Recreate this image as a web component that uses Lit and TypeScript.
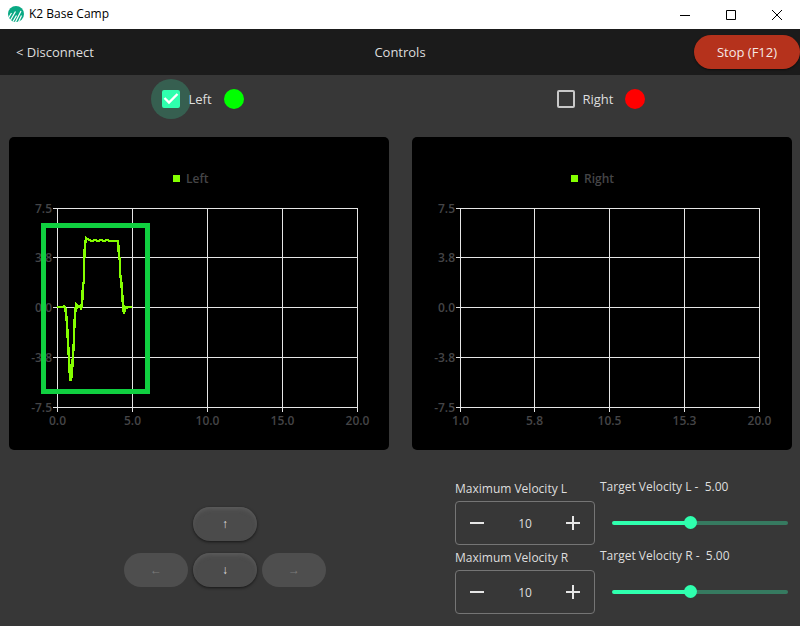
import { LitElement, html, css, svg, nothing } from "lit";
import { customElement, property, state } from "lit/decorators.js";

const GRID_Y = [71, 120, 170, 220, 270];
const Y_LABELS = ["7.5", "3.8", "0.0", "-3.8", "-7.5"];

const VELOCITY_TRACE =
  "48,170 54,170 55,169 56,170 57,176 58,186 59,206 60,222 61,240 61,243 62,243 63,234 64,218 65,204 65,196 66,178 67,167 68,168 69,170 71,169 72,171 73,169 74,148 75,144 75,126 76,108 77,101 80,103 83,104 86,103 89,104 92,103 95,104 98,103 101,104 109,104 110,118 111,124 111,137 112,142 113,154 114,168 115,177 116,170 118,171 119,170 123,170";

/** Line chart with a legend, a grid and an optional trace and highlight frame. */
@customElement("velocity-chart")
export class VelocityChart extends LitElement {
  @property() name = "";
  @property() trace = "";
  @property({ type: Boolean }) highlight = false;
  @property({ attribute: false }) gridX: number[] = [];
  @property({ attribute: false }) xLabels: string[] = [];
  @property({ type: Number }) legendX = 164;

  static styles = css`
    :host {
      display: block;
      background: #000;
      border-radius: 5px;
      overflow: hidden;
    }
    svg {
      display: block;
      width: 100%;
      height: auto;
    }
    text {
      font: 600 12px "Open Sans", "Noto Sans", sans-serif;
      fill: #454547;
    }
    .grid {
      stroke: #e6e6e6;
      stroke-width: 1;
      shape-rendering: crispEdges;
    }
    .trace {
      fill: none;
      stroke: #84ff00;
      stroke-width: 2.5;
      shape-rendering: crispEdges;
    }
    .frame {
      fill: none;
      stroke: #10d040;
      stroke-width: 5;
    }
    .key {
      fill: #84ff00;
    }
    .end {
      text-anchor: end;
    }
    .middle {
      text-anchor: middle;
    }
  `;

  render() {
    const first = this.gridX[0];
    const last = this.gridX[this.gridX.length - 1];
    return html`
      <svg viewBox="0 0 380 313" role="img" aria-label="${this.name} velocity">
        <rect class="key" x=${this.legendX} y="38" width="7" height="7"></rect>
        <text x=${this.legendX + 13} y="46">${this.name}</text>
        ${GRID_Y.map(
          (y, i) => svg`
            <text class="end" x=${first - 5} y=${y + 5}>${Y_LABELS[i]}</text>
            <line class="grid" x1=${first - 4} x2=${last + 1} y1=${y + 0.5} y2=${y + 0.5}></line>`
        )}
        ${this.gridX.map(
          (x, i) => svg`
            <line class="grid" x1=${x + 0.5} x2=${x + 0.5} y1="71" y2="275"></line>
            <text class="middle" x=${x + 0.5} y="288">${this.xLabels[i]}</text>`
        )}
        ${this.trace ? svg`<polyline class="trace" points=${this.trace}></polyline>` : nothing}
        ${this.highlight
          ? svg`<rect class="frame" x="34.5" y="88.5" width="104" height="166"></rect>`
          : nothing}
      </svg>
    `;
  }
}

/** Numeric field with minus and plus buttons beside a target slider. */
@customElement("velocity-control")
export class VelocityControl extends LitElement {
  @property() side = "L";
  @state() private max = 10;
  @state() private target = 5;

  static styles = css`
    :host {
      display: grid;
      grid-template-columns: 140px 1fr;
      column-gap: 5px;
      height: 69px;
      color: #dedede;
    }
    label {
      display: block;
      font-size: 12px;
      line-height: 18px;
      white-space: pre;
    }
    .max {
      padding-top: 2px;
    }
    .field {
      display: flex;
      box-sizing: border-box;
      height: 44px;
      margin-top: 3px;
      border: 1px solid #757575;
      border-radius: 4px;
    }
    button {
      width: 42px;
      padding: 0;
      border: 0;
      background: none;
      color: #e6e6e6;
      display: grid;
      place-items: center;
    }
    .value {
      flex: 1;
      min-width: 0;
      padding: 0;
      border: 0;
      background: none;
      color: inherit;
      font: inherit;
      font-size: 12px;
      text-align: center;
    }
    .slider {
      appearance: none;
      display: block;
      width: calc(100% - 12px);
      height: 24px;
      margin: 15px 0 0 12px;
      background: none;
    }
    .slider::-webkit-slider-runnable-track {
      height: 4px;
      border-radius: 2px;
      background: linear-gradient(to right, #2fffae var(--fill), #367a60 var(--fill));
    }
    .slider::-webkit-slider-thumb {
      appearance: none;
      width: 13px;
      height: 13px;
      margin-top: -5px;
      border-radius: 50%;
      background: #2fffae;
    }
  `;

  render() {
    const fill = ((this.target - 1) / (this.max - 1)) * 100;
    return html`
      <div class="max">
        <label for="max">Maximum Velocity ${this.side}</label>
        <div class="field">
          <button aria-label="Decrease" @click=${() => (this.max = Math.max(2, this.max - 1))}>
            <svg width="14" height="14"><path d="M0 7H14" stroke="currentColor" stroke-width="2" /></svg>
          </button>
          <input class="value" id="max" type="text" inputmode="numeric" .value=${String(this.max)} />
          <button aria-label="Increase" @click=${() => this.max++}>
            <svg width="14" height="14"><path d="M0 7H14M7 0V14" stroke="currentColor" stroke-width="2" /></svg>
          </button>
        </div>
      </div>
      <div>
        <label for="target">Target Velocity ${this.side} -  ${this.target.toFixed(2)}</label>
        <input
          class="slider"
          id="target"
          type="range"
          min="1"
          max=${this.max}
          step="0.01"
          .value=${String(this.target)}
          style="--fill:${fill}%"
          @input=${(e: Event) => (this.target = Number((e.target as HTMLInputElement).value))}
        />
      </div>
    `;
  }
}

@customElement("app-root")
export class AppRoot extends LitElement {
  static styles = css`
    :host {
      display: flex;
      flex-direction: column;
      min-height: 100vh;
      background: #373737;
      color: #dedede;
      font-family: "Open Sans", "Noto Sans", sans-serif;
      font-size: 13px;
    }
    button {
      font: inherit;
      color: inherit;
      border: 0;
      padding: 0;
    }
    .titlebar {
      display: flex;
      align-items: center;
      height: 29px;
      padding-left: 8px;
      background: #fff;
      color: #000;
      font-size: 12px;
    }
    .logo {
      margin: 0 5px 2px 0;
    }
    .app-name {
      flex: 1;
      padding-bottom: 2px;
    }
    .window-button {
      display: grid;
      place-items: center;
      width: 46px;
      height: 27px;
      background: none;
    }
    .header {
      display: grid;
      grid-template-columns: 1fr auto 1fr;
      align-items: center;
      height: 46px;
      background: #1b1b1b;
    }
    .back {
      justify-self: start;
      margin-left: 16px;
      color: inherit;
      text-decoration: none;
    }
    .stop {
      justify-self: end;
      width: 106px;
      height: 34px;
      border-radius: 17px;
      background: #b5321c;
      color: #f5e9e6;
      box-shadow: 0 1px 2px #0008;
    }
    .toggles {
      display: grid;
      grid-template-columns: 1fr 1fr;
      height: 48px;
      padding-left: 4px;
    }
    .toggle {
      display: flex;
      align-items: center;
      justify-content: center;
    }
    .toggle label {
      position: relative;
      margin: 0 12px 0 8px;
    }
    .box {
      position: relative;
      display: grid;
      place-items: center;
      width: 18px;
      height: 18px;
    }
    .box.focused::before {
      content: "";
      position: absolute;
      inset: -11px;
      border-radius: 50%;
      background: #365f50;
    }
    .box input {
      grid-area: 1 / 1;
      position: relative;
      appearance: none;
      box-sizing: border-box;
      width: 18px;
      height: 18px;
      margin: 0;
      border: 2px solid #c8c8c8;
      border-radius: 2px;
    }
    .box input:checked {
      border-color: #2fffae;
      background: #2fffae;
    }
    .tick {
      grid-area: 1 / 1;
      position: relative;
      pointer-events: none;
    }
    .lamp {
      width: 20px;
      height: 20px;
      border-radius: 50%;
      background: #f00;
    }
    .lamp.on {
      background: #0f0;
    }
    .charts {
      display: grid;
      grid-template-columns: 1fr 1fr;
      gap: 23px;
      padding: 14px 8px 0 9px;
    }
    .controls {
      display: flex;
      padding: 28px 12px 0 0;
    }
    .pad {
      flex: 1;
      display: grid;
      grid-template-columns: repeat(3, 64px);
      grid-auto-rows: 34px;
      gap: 12px 5px;
      justify-content: center;
      padding-top: 29px;
    }
    .pad button {
      border-radius: 17px;
      background: #4b4b4b;
      box-shadow: 0 1px 3px #0009, inset 0 3px 4px -1px #5c5c5c;
      font-family: "Liberation Sans", sans-serif;
      font-size: 12px;
    }
    .pad .up {
      grid-column: 2;
    }
    .pad .left {
      grid-column: 1;
    }
    .pad button:disabled {
      background: #4e4e4e;
      box-shadow: none;
      color: #7c7c7c;
    }
    .velocities {
      width: 333px;
      margin-left: 5px;
    }
  `;

  render() {
    return html`
      <div class="titlebar">
        <svg class="logo" width="16" height="16" viewBox="0 0 16 16" aria-hidden="true">
          <circle cx="8" cy="8" r="8" fill="#0aa984" />
          <path
            d="M0.500 12L3.500 7M2 15L7.500 5.500M5 15.500L8.500 9.500M7.500 16L13 5M10.500 16L13.500 9.500"
            fill="none" stroke="#fff" stroke-width="1.200" />
        </svg>
        <span class="app-name">K2 Base Camp</span>
        <button class="window-button" aria-label="Minimize">
          <svg width="10" height="10"><path d="M0 5.500H10" stroke="#000" /></svg>
        </button>
        <button class="window-button" aria-label="Maximize">
          <svg width="10" height="10"><path d="M.5.5H9.500V9.500H.5Z" fill="none" stroke="#000" /></svg>
        </button>
        <button class="window-button" aria-label="Close">
          <svg width="10" height="10"><path d="M0 0L10 10M10 0L0 10" stroke="#000" /></svg>
        </button>
      </div>

      <header class="header">
        <a class="back" href="#">&lt; Disconnect</a>
        <span>Controls</span>
        <button class="stop">Stop (F12)</button>
      </header>

      <div class="toggles">
        <div class="toggle">
          <span class="box focused">
            <input id="left" type="checkbox" checked />
            <svg class="tick" width="18" height="18">
              <path d="M2.500 8L7 12.500L15.500 4" fill="none" stroke="#fff" stroke-width="2.400" />
            </svg>
          </span>
          <label for="left">Left</label>
          <span class="lamp on"></span>
        </div>
        <div class="toggle">
          <span class="box"><input id="right" type="checkbox" /></span>
          <label for="right">Right</label>
          <span class="lamp"></span>
        </div>
      </div>

      <div class="charts">
        <velocity-chart
          name="Left"
          highlight
          .legendX=${164}
          .trace=${VELOCITY_TRACE}
          .gridX=${[48, 123, 198, 273, 348]}
          .xLabels=${["0.0", "5.0", "10.0", "15.0", "20.0"]}
        ></velocity-chart>
        <velocity-chart
          name="Right"
          .legendX=${159}
          .gridX=${[48, 122, 197, 272, 347]}
          .xLabels=${["1.0", "5.8", "10.5", "15.3", "20.0"]}
        ></velocity-chart>
      </div>

      <div class="controls">
        <div class="pad">
          <button class="up" aria-label="Forward">↑</button>
          <button class="left" aria-label="Turn left" disabled>←</button>
          <button aria-label="Backward">↓</button>
          <button aria-label="Turn right" disabled>→</button>
        </div>
        <div class="velocities">
          <velocity-control side="L"></velocity-control>
          <velocity-control side="R"></velocity-control>
        </div>
      </div>
    `;
  }
}
